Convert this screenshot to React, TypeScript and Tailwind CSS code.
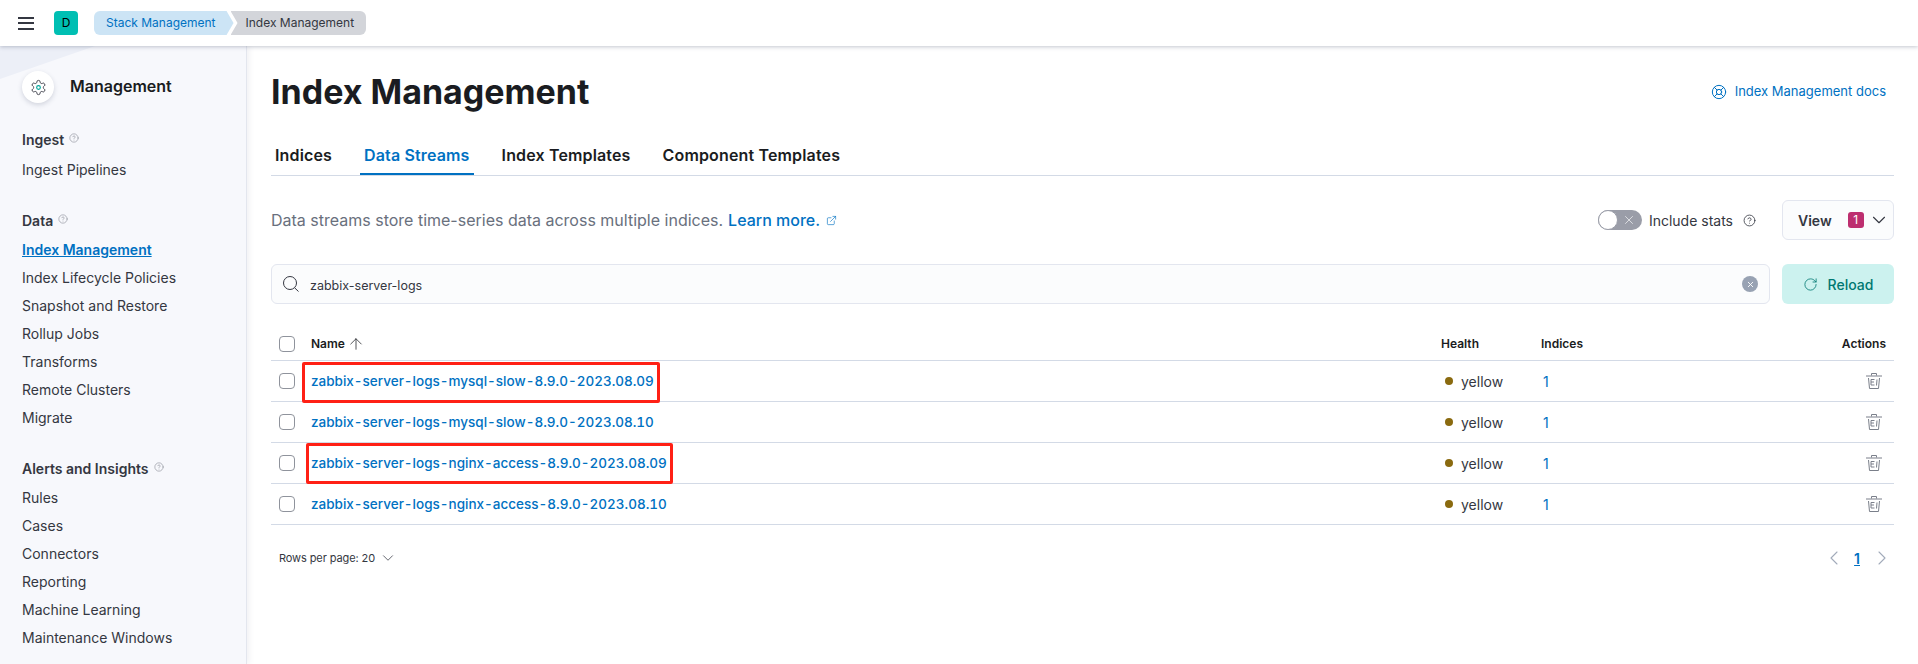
import React from 'react';
import { ChevronDown, ChevronLeft, ChevronRight, X, ArrowUp, RotateCw, ExternalLink, LifeBuoy, CircleHelp } from 'lucide-react';

const SIDE_GROUPS = [
    { title: 'Ingest', items: ['Ingest Pipelines'] },
    { title: 'Data', items: ['Index Management', 'Index Lifecycle Policies', 'Snapshot and Restore', 'Rollup Jobs', 'Transforms', 'Remote Clusters', 'Migrate'] },
    { title: 'Alerts and Insights', items: ['Rules', 'Cases', 'Connectors', 'Reporting', 'Machine Learning', 'Maintenance Windows'] },
];

const ROWS = [
    { name: 'zabbix-server-logs-mysql-slow-8.9.0-2023.08.09', box: 'top-[1px] left-[31px] w-[358px]' },
    { name: 'zabbix-server-logs-mysql-slow-8.9.0-2023.08.10', box: '' },
    { name: 'zabbix-server-logs-nginx-access-8.9.0-2023.08.09', box: 'top-0 left-[35px] w-[367px]' },
    { name: 'zabbix-server-logs-nginx-access-8.9.0-2023.08.10', box: '' },
];

const TABS = ['Indices', 'Data Streams', 'Index Templates', 'Component Templates'];

const Checkbox = () => <span className="block w-4 h-4 rounded-[4px] border border-[#8f939c] bg-white" />;

const GearIcon = () => (
    <svg width="17" height="17" viewBox="0 0 24 24" fill="none" stroke="#343741" strokeWidth="1.3">
        <path d="M12.22 2h-.44a2 2 0 0 0-2 2v.18a2 2 0 0 1-1 1.73l-.43.25a2 2 0 0 1-2 0l-.15-.08a2 2 0 0 0-2.73.73l-.22.38a2 2 0 0 0 .73 2.73l.15.1a2 2 0 0 1 1 1.72v.51a2 2 0 0 1-1 1.74l-.15.09a2 2 0 0 0-.73 2.73l.22.38a2 2 0 0 0 2.73.73l.15-.08a2 2 0 0 1 2 0l.43.25a2 2 0 0 1 1 1.73V20a2 2 0 0 0 2 2h.44a2 2 0 0 0 2-2v-.18a2 2 0 0 1 1-1.73l.43-.25a2 2 0 0 1 2 0l.15.08a2 2 0 0 0 2.73-.73l.22-.39a2 2 0 0 0-.73-2.73l-.15-.08a2 2 0 0 1-1-1.74v-.5a2 2 0 0 1 1-1.74l.15-.09a2 2 0 0 0 .73-2.73l-.22-.38a2 2 0 0 0-2.73-.73l-.15.08a2 2 0 0 1-2 0l-.43-.25a2 2 0 0 1-1-1.73V4a2 2 0 0 0-2-2z" />
        <circle cx="12" cy="12" r="2.6" stroke="#00a69b" strokeWidth="1.6" />
    </svg>
);

const SearchIcon = () => (
    <svg width="16" height="16" viewBox="0 0 16 16" fill="none" stroke="#343741" strokeWidth="1">
        <circle cx="7" cy="7" r="6.5" />
        <path d="M11.6 11.8 L15.5 15.5" />
    </svg>
);

const TrashIcon = () => (
    <svg width="16" height="16" viewBox="0 0 16 16" fill="none" stroke="#7a7f8a" strokeWidth="1">
        <path d="M5.5 2.5 V0.5 H10.5 V2.5" />
        <path d="M0 3 H16" />
        <path d="M2.5 5 L3.5 15.5 H12.5 L13.5 5" />
        <path d="M8.5 6.5 H5 V12 H8.5 M5 9 H8" />
        <path d="M11 6.5 L10.5 12.5" />
    </svg>
);

const Sidebar = () => (
    <aside className="relative w-[247px] shrink-0 bg-[#f7f8fc] border-r border-[#e3e6ee] shadow-[2px_0_6px_rgba(60,70,100,0.08)] pl-[22px] overflow-hidden">
        <svg className="absolute left-0 top-0" width="246" height="36" viewBox="0 0 246 36">
            <polygon points="0,0 95,0 0,33" fill="#eceff7" />
        </svg>
        <div className="relative flex items-center h-[32px] mt-[25px] gap-[16px]">
            <span className="w-8 h-8 rounded-full bg-white shadow-[0_2px_5px_rgba(60,70,100,0.2)] flex items-center justify-center">
                <GearIcon />
            </span>
            <span className="text-[16px] font-semibold text-[#1a1c21] -mt-[3px]">Management</span>
        </div>
        {SIDE_GROUPS.map((group, i) => (
            <div key={group.title} className="mt-[26px]">
                <div className="flex items-center gap-[5px] h-[20px] text-[14px] font-semibold text-[#343741]">
                    {group.title}
                    <CircleHelp size={10} strokeWidth={1.3} className="text-[#7a7f8a] -mt-[2px]" />
                </div>
                <ul className={i === 0 ? 'mt-[7px]' : 'mt-[6px]'}>
                    {group.items.map(item => (
                        <li key={item} className="h-[28px] leading-[28px] text-[14px] text-[#343741]">
                            {item === 'Index Management'
                                ? <span className="font-semibold text-[#0071c2] underline">{item}</span>
                                : item}
                        </li>
                    ))}
                </ul>
            </div>
        ))}
    </aside>
);

const App: React.FC = () => {
    return (
        <div className="h-[664px] w-full overflow-hidden bg-white flex flex-col font-['Inter',sans-serif] text-[#343741]">
            <header className="relative z-10 h-[46px] shrink-0 bg-white shadow-[0_1px_4px_rgba(60,70,100,0.3)] flex items-center pl-[18px]">
                <span className="w-4 flex flex-col gap-[3.5px]">
                    <i className="block h-[2px] bg-[#343741]" />
                    <i className="block h-[2px] bg-[#343741]" />
                    <i className="block h-[2px] bg-[#343741]" />
                </span>
                <span className="ml-[20px] w-6 h-6 rounded-[4px] bg-[#00bfb3] flex items-center justify-center text-[12px] text-black">D</span>
                <nav className="ml-4 flex items-center h-6 text-[12px]">
                    <span className="h-6 pl-3 pr-[18px] leading-6 rounded-l-[6px] bg-[#cce4f5] text-[#0071c2] [clip-path:polygon(0_0,calc(100%-7px)_0,100%_50%,calc(100%-7px)_100%,0_100%)]">Stack Management</span>
                    <span className="h-6 pl-[15px] pr-3 -ml-[3px] leading-6 rounded-r-[6px] bg-[#d3d5da] text-[#343741] [clip-path:polygon(0_0,100%_0,100%_100%,0_100%,7px_50%)]">Index Management</span>
                </nav>
            </header>

            <div className="flex flex-1 min-h-0">
                <Sidebar />
                <main className="flex-1 min-w-0 pl-6 pr-6">
                    <div className="flex items-center justify-between h-[40px] mt-[26px]">
                        <h1 className="text-[34px] leading-[40px] font-bold text-[#1a1c21]">Index Management</h1>
                        <a className="flex items-center gap-2 text-[13px] text-[#0071c2] pr-2">
                            <LifeBuoy size={16} strokeWidth={1.5} />
                            Index Management docs
                        </a>
                    </div>

                    <div className="flex gap-6 h-[41px] mt-[23px] border-b border-[#d3dae6] text-[16px] font-semibold tracking-[0.15px] text-[#1a1c21]">
                        {TABS.map(tab => (
                            <span
                                key={tab}
                                className={tab === 'Data Streams'
                                    ? 'px-1 pt-2 h-[40px] leading-6 border-b-2 border-[#0071c2] text-[#0071c2]'
                                    : 'px-1 pt-2 h-[40px] leading-6'}
                            >
                                {tab}
                            </span>
                        ))}
                    </div>

                    <div className="flex items-center h-[40px] mt-[24px]">
                        <p className="text-[16px] text-[#69707d] flex items-center">
                            Data streams store time-series data across multiple indices.
                            <a className="ml-[5px] font-medium text-[#0071c2]">Learn more.</a>
                            <ExternalLink size={11} strokeWidth={1.4} className="ml-[6px] text-[#0071c2]" />
                        </p>
                        <div className="ml-auto flex items-center">
                            <span className="relative w-[44px] h-5 rounded-full bg-[#9a9da8] mr-[7px]">
                                <span className="absolute left-0 top-0 w-5 h-5 rounded-full bg-white border border-[#9a9da8]" />
                                <X size={14} strokeWidth={1.1} className="absolute right-[6px] top-[3px] text-white" />
                            </span>
                            <span className="text-[14px] text-[#343741]">Include stats</span>
                            <CircleHelp size={13} strokeWidth={1.5} className="ml-[10px] text-[#343741]" />
                            <button className="ml-[26px] w-[112px] h-10 rounded-[6px] border border-[#e3e6ef] bg-[#fbfcfd] flex items-center pl-[15px] text-[14px] font-semibold text-[#343741]">
                                View
                                <span className="ml-[16px] w-4 h-4 rounded-[3px] bg-[#bd2e6f] text-white text-[12px] font-normal leading-4 text-center">1</span>
                                <ChevronDown size={22} strokeWidth={1.2} className="ml-[4px]" />
                            </button>
                        </div>
                    </div>

                    <div className="flex gap-3 mt-[24px]">
                        <div className="flex-1 h-10 rounded-[6px] border border-[#e3e6ef] bg-[#fbfcfd] flex items-center pl-[11px] pr-[11px]">
                            <SearchIcon />
                            <span className="ml-[11px] mt-[5px] text-[12.5px] leading-none text-[#343741]">zabbix-server-logs</span>
                            <span className="ml-auto w-4 h-4 rounded-full bg-[#98a2b3] flex items-center justify-center">
                                <X size={9} strokeWidth={2.4} className="text-white" />
                            </span>
                        </div>
                        <button className="w-[112px] h-10 rounded-[6px] bg-[#ccf2ef] text-[#007871] flex items-center justify-center gap-[10px] text-[14px] font-medium">
                            <RotateCw size={15} strokeWidth={1.3} />
                            Reload
                        </button>
                    </div>

                    <div className="mt-6">
                        <div className="grid grid-cols-[40px_1fr_100px_100px_253px] items-center h-[33px] border-b border-[#d3dae6] text-[12px] font-semibold text-[#1a1c21]">
                            <span className="pl-2"><Checkbox /></span>
                            <span className="flex items-center gap-[2px]">Name <ArrowUp size={18} strokeWidth={1} /></span>
                            <span>Health</span>
                            <span>Indices</span>
                            <span className="justify-self-end pr-2">Actions</span>
                        </div>
                        {ROWS.map(row => (
                            <div key={row.name} className="relative grid grid-cols-[40px_1fr_100px_100px_253px] items-center h-[41px] border-b border-[#d3dae6] text-[14px]">
                                <span className="pl-2"><Checkbox /></span>
                                <a className="text-[13.5px] font-medium tabular-nums text-[#0071c2]">{row.name}</a>
                                <span className="flex items-center gap-2 pl-1 text-[#343741]">
                                    <i className="block w-2 h-2 rounded-full bg-[#8a6a0f]" />
                                    yellow
                                </span>
                                <span className="pl-[2px] text-[#0071c2]">1</span>
                                <span className="justify-self-end pr-3">
                                    <TrashIcon />
                                </span>
                                {row.box && <span className={`absolute h-[41px] rounded-[2px] border-[3px] border-[#ff2015] ${row.box}`} />}
                            </div>
                        ))}
                    </div>

                    <div className="flex items-center justify-between h-[24px] mt-[21px] pl-2">
                        <span className="flex items-center gap-1 text-[11px] tracking-[-0.1px] text-[#343741]">
                            Rows per page: 20
                            <ChevronDown size={18} strokeWidth={1} />
                        </span>
                        <span className="flex items-center gap-2 text-[14px]">
                            <ChevronLeft size={24} strokeWidth={1.1} className="text-[#a2abba]" />
                            <span className="font-semibold text-[#0071c2] underline">1</span>
                            <ChevronRight size={24} strokeWidth={1.1} className="ml-[2px] text-[#a2abba]" />
                        </span>
                    </div>
                </main>
            </div>
        </div>
    );
};

export default App;
